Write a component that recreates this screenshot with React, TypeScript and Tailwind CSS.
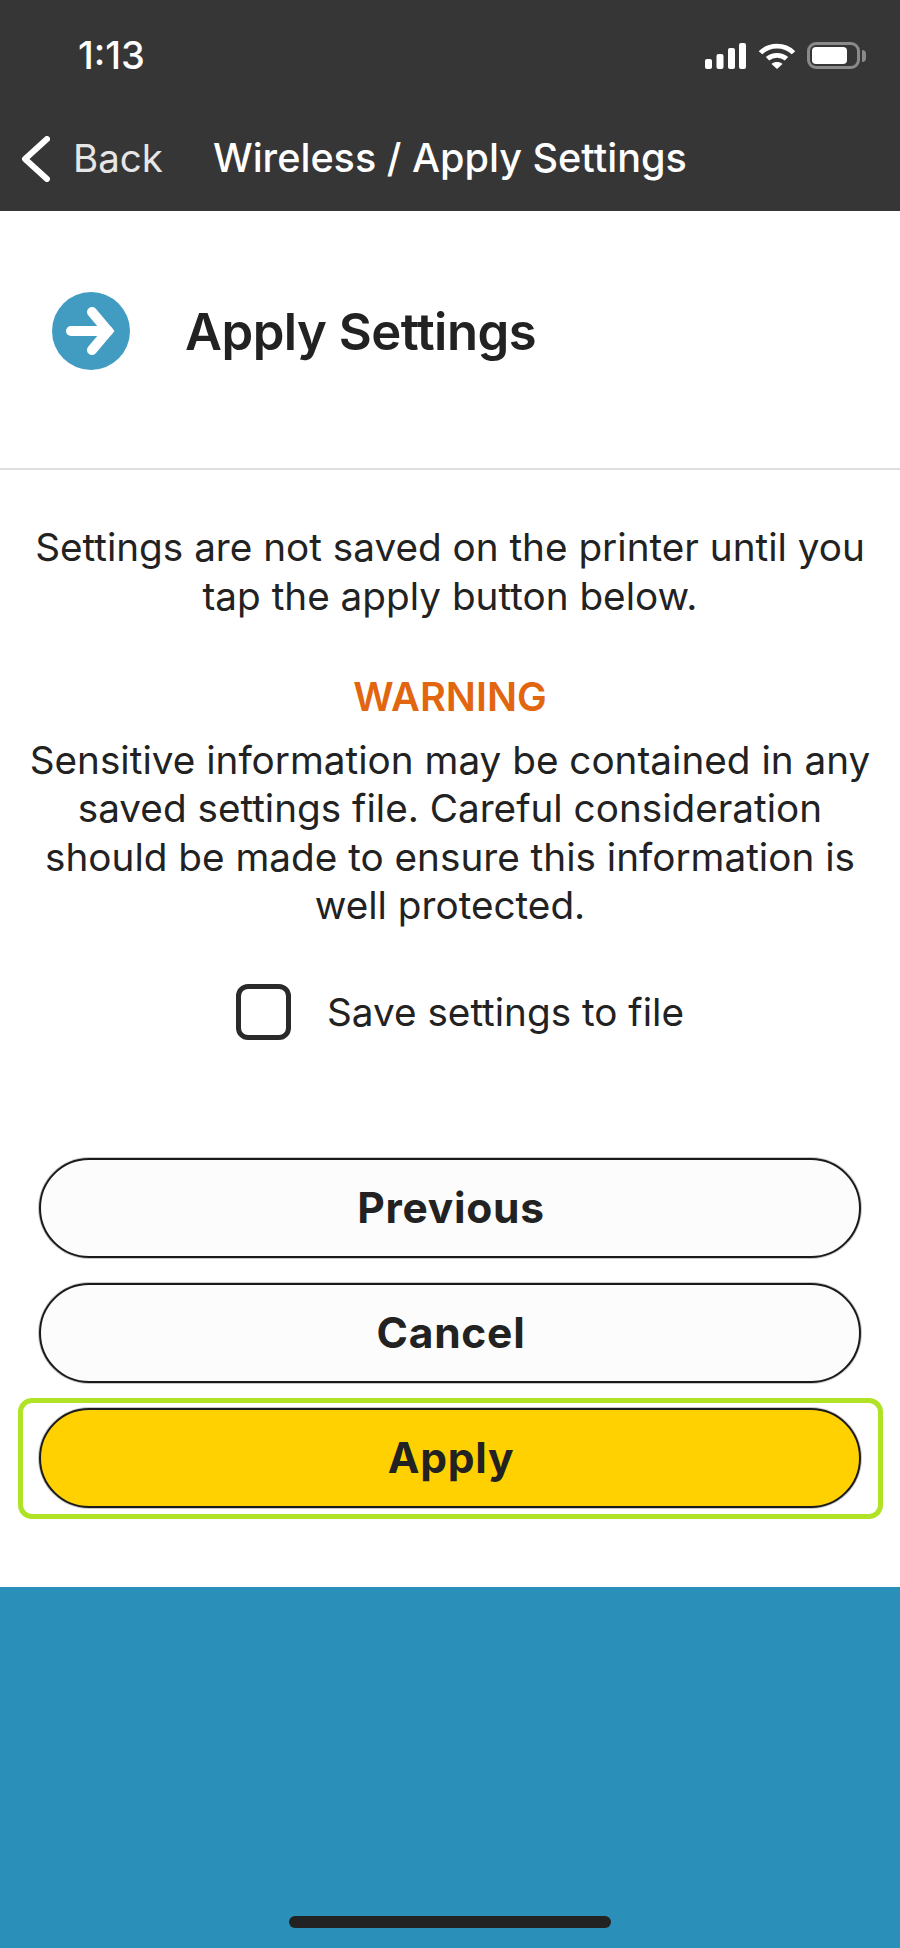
function SignalIcon() {
  return (
    <svg width="41" height="26" viewBox="0 0 41 26" fill="#fff">
      <rect x="0" y="16" width="7" height="10" rx="2" />
      <rect x="11.5" y="11" width="7" height="15" rx="2" />
      <rect x="23" y="5" width="7" height="21" rx="2" />
      <rect x="34" y="0" width="7" height="26" rx="2" />
    </svg>
  );
}

function WifiIcon() {
  return (
    <svg width="38" height="26" viewBox="0 0 38 28" preserveAspectRatio="none" fill="none" stroke="#fff" strokeWidth="5">
      <path d="M2.5 10.5C11.8 1 26.2 1 35.5 10.5" />
      <path d="M9.5 17C15 12 23 12 28.5 17" />
      <path d="M19 28L13.5 22.5C16.5 19.8 21.5 19.8 24.5 22.5Z" fill="#fff" stroke="none" />
    </svg>
  );
}

function BatteryIcon() {
  return (
    <div className="flex items-center">
      <div className="flex h-[27px] w-[53px] items-center rounded-[9px] border-[3px] border-[#8a8a8a] p-[2px]">
        <div className="h-full w-[35px] rounded-[4px] bg-white" />
      </div>
      <div className="ml-[2px] h-[12px] w-[4px] rounded-r-full bg-[#8a8a8a]" />
    </div>
  );
}

function PillButton({ label, primary }: { label: string; primary?: boolean }) {
  return (
    <button
      className={
        primary
          ? "flex h-[100px] w-[822px] items-center justify-center rounded-full border-2 border-[#1a1a1a] bg-[#ffd100] pl-[2px] text-[42.5px] font-bold tracking-[0.75px] text-[#222] shadow-[0_0_0_1px_rgba(34,34,34,0.25)]"
          : "flex h-[100px] w-[822px] items-center justify-center rounded-full border-2 border-[#1a1a1a] bg-[#fcfcfc] pl-[2px] text-[42.5px] font-bold tracking-[0.75px] text-[#222] shadow-[0_0_0_1px_rgba(34,34,34,0.25)]"
      }
    >
      {label}
    </button>
  );
}

export default function App() {
  return (
    <div className="flex h-[1948px] w-[900px] flex-col bg-white font-['Inter',sans-serif] text-[#222]">
      <header className="h-[211px] bg-[#363636] text-white">
        <div className="flex h-[110px] items-start justify-between pt-[36px] pr-[34px] pl-[78px]">
          <span className="text-[38px] leading-[38px] font-medium">1:13</span>
          <div className="flex items-center gap-[12px] pt-[6px]">
            <SignalIcon />
            <div className="flex items-center gap-[11px]">
              <WifiIcon />
              <BatteryIcon />
            </div>
          </div>
        </div>
        <div className="flex h-[94px] items-center pt-[3px] pl-[22px]">
          <svg width="28" height="46" viewBox="0 0 28 46" fill="none" stroke="#fff" strokeWidth="6" strokeLinecap="round" strokeLinejoin="round">
            <path d="M25 3L3 23L25 43" />
          </svg>
          <span className="ml-[23px] text-[38.5px] font-normal text-[#e6e6e6]">Back</span>
          <span className="ml-[50px] text-[39.6px] font-medium">Wireless / Apply Settings</span>
        </div>
      </header>

      <div className="flex h-[259px] items-center border-b-2 border-[#dedede] pb-[17px] pl-[52px]">
        <div className="flex size-[78px] items-center justify-center rounded-full bg-[#429cc2]">
          <svg width="50" height="50" viewBox="0 0 50 50" fill="none" stroke="#fff" strokeWidth="10" strokeLinecap="round" strokeLinejoin="miter">
            <path d="M5 25H42" />
            <path d="M26 6L42 25L26 44" />
          </svg>
        </div>
        <h1 className="ml-[55px] pt-[3px] text-[50.8px] font-semibold tracking-[-0.5px]">Apply Settings</h1>
      </div>

      <main className="flex flex-1 flex-col items-center">
        <div className="pt-[53px] text-center text-[38.7px] leading-[48.5px]">
          <p>
            Settings are not saved on the printer until you
            <br />
            tap the apply button below.
          </p>
          <p className="mt-[53px] text-[39.7px] font-semibold text-[#e2660f]">WARNING</p>
          <p className="mt-[14px]">
            Sensitive information may be contained in any
            <br />
            saved settings file. Careful consideration
            <br />
            should be made to ensure this information is
            <br />
            well protected.
          </p>
        </div>

        <label className="mt-[53px] ml-[20px] flex items-center">
          <span className="h-[56px] w-[55px] rounded-[12px] border-[5px] border-[#2a2a2a]" />
          <span className="ml-[36px] text-[38.7px]">Save settings to file</span>
        </label>

        <div className="mt-[117.5px] flex flex-col items-center gap-[25px]">
          <PillButton label="Previous" />
          <PillButton label="Cancel" />
          <div className="-my-[10px] flex h-[121px] w-[865px] items-center justify-center rounded-[14px] border-[5px] border-[#b0e225] pb-[1px]">
            <PillButton label="Apply" primary />
          </div>
        </div>
      </main>

      <footer className="flex h-[361px] items-end justify-center bg-[#2a90ba] pb-[20px]">
        <div className="h-[12px] w-[322px] rounded-full bg-[#222]" />
      </footer>
    </div>
  );
}
